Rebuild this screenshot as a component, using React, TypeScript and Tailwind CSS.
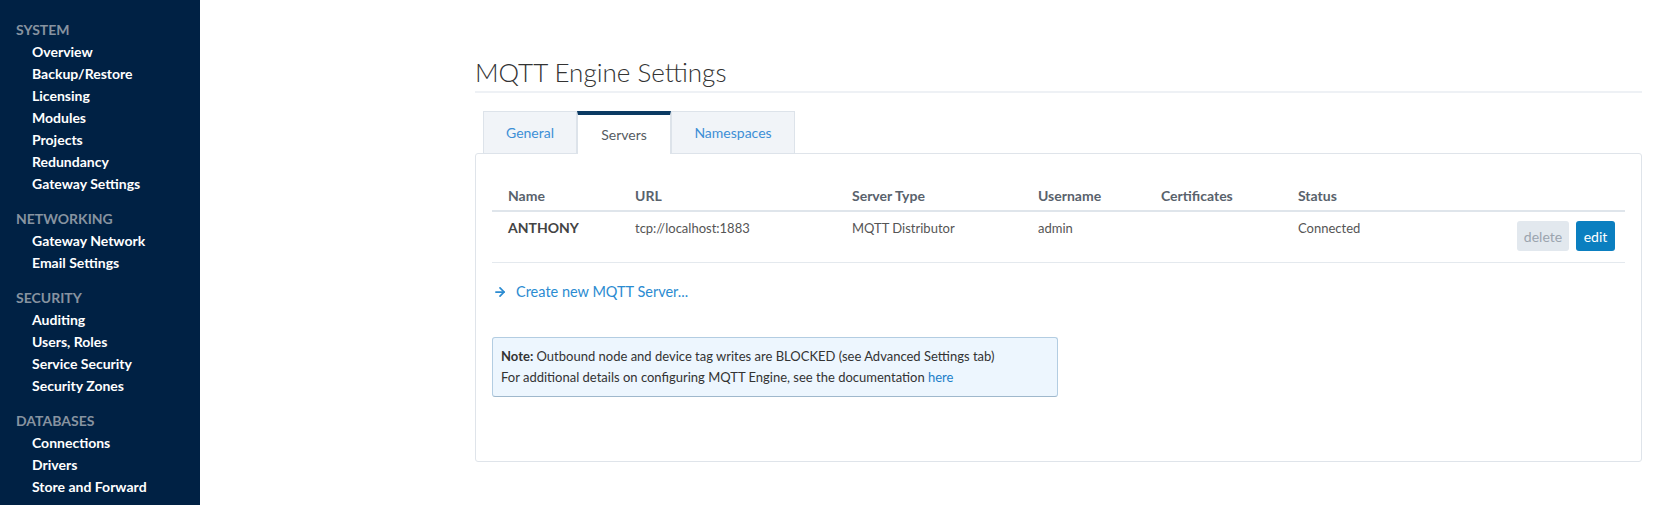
import React from 'react';
import { ArrowRight } from 'lucide-react';

const navSections = [
  {
    title: 'System',
    items: ['Overview', 'Backup/Restore', 'Licensing', 'Modules', 'Projects', 'Redundancy', 'Gateway Settings'],
  },
  { title: 'Networking', items: ['Gateway Network', 'Email Settings'] },
  { title: 'Security', items: ['Auditing', 'Users, Roles', 'Service Security', 'Security Zones'] },
  { title: 'Databases', items: ['Connections', 'Drivers', 'Store and Forward'] },
];

const columns = [
  { label: 'Name', width: 'w-[127px]' },
  { label: 'URL', width: 'w-[217px]' },
  { label: 'Server Type', width: 'w-[186px]' },
  { label: 'Username', width: 'w-[123px]' },
  { label: 'Certificates', width: 'w-[137px]' },
  { label: 'Status', width: 'w-[140px]' },
];

const Sidebar: React.FC = () => (
  <aside className="w-[200px] shrink-0 bg-[#002144] pt-[18px] pl-4">
    {navSections.map((section, i) => (
      <div key={section.title} className={i > 0 ? 'mt-3' : ''}>
        <div className="text-[14px] leading-[23px] font-bold uppercase text-[#8793a0]">{section.title}</div>
        {section.items.map((item) => (
          <div key={item} className="pl-4 text-[14px] leading-[22px] font-bold text-white">
            {item}
          </div>
        ))}
      </div>
    ))}
  </aside>
);

const Tabs: React.FC = () => (
  <div className="mt-[18px] ml-[8px] flex -mb-px relative">
    <div className="w-[94px] h-[43px] flex items-center justify-center bg-[#f1f4f8] border border-[#dde3ea] text-[14px] text-[#3d8fd6]">
      General
    </div>
    <div className="w-[94px] h-[43px] flex items-center justify-center bg-white border-t-4 border-t-[#0b3a63] border-x border-x-[#dde3ea] text-[14px] text-[#555b62]">
      Servers
    </div>
    <div className="w-[124px] h-[43px] flex items-center justify-center bg-[#f1f4f8] border border-[#dde3ea] text-[14px] text-[#3d8fd6]">
      Namespaces
    </div>
  </div>
);

const ServersTable: React.FC = () => (
  <table className="w-full table-fixed border-collapse text-[13px]">
    <thead>
      <tr className="border-b-2 border-[#dfe5eb]">
        {columns.map((col) => (
          <th key={col.label} className={`${col.width} pl-4 pt-[10px] pb-[4px] leading-[20px] text-left text-[14px] font-bold text-[#59626c]`}>
            {col.label}
          </th>
        ))}
        <th />
      </tr>
    </thead>
    <tbody>
      <tr className="border-b border-[#e4e9ee] align-top">
        <td className="pl-4 pt-[6px] leading-[20px] text-[14px] font-bold text-[#444]">ANTHONY</td>
        <td className="pl-4 pt-[6px] leading-[20px] text-[#555]">tcp://localhost:1883</td>
        <td className="pl-4 pt-[6px] leading-[20px] text-[#555]">MQTT Distributor</td>
        <td className="pl-4 pt-[6px] leading-[20px] text-[#555]">admin</td>
        <td className="pl-4 pt-[6px] leading-[20px] text-[#555]"></td>
        <td className="pl-4 pt-[6px] leading-[20px] text-[#555]">Connected</td>
        <td className="pt-[9px] pb-[11px] pr-[10px]">
          <div className="flex justify-end gap-[7px]">
            <button className="h-[30px] w-[52px] rounded-[3px] bg-[#e2e8ee] text-[14px] text-[#9ba4ae]">delete</button>
            <button className="h-[30px] w-[39px] rounded-[3px] bg-[#0b7fc0] text-[14px] text-white">edit</button>
          </div>
        </td>
      </tr>
    </tbody>
  </table>
);

export default function App() {
  return (
    <div className="flex min-h-screen bg-white font-['Lato','Liberation_Sans',sans-serif]">
      <Sidebar />
      <main className="flex-1 pl-[275px] pr-[26px]">
        <h1 className="pt-[54px] pb-[1px] leading-[36px] text-[26px] font-light text-[#333] border-b-2 border-[#eef1f5]">
          MQTT Engine Settings
        </h1>
        <Tabs />
        <section className="border border-[#dfe4ea] rounded-[3px] bg-white px-4 pt-[22px] pb-[64px]">
          <ServersTable />
          <div className="mt-[17px] flex items-center leading-[24px] text-[14.5px] text-[#2b8bd1]">
            <ArrowRight size={14} strokeWidth={3} className="ml-[1px]" />
            <span className="ml-[9px]">Create new MQTT Server...</span>
          </div>
          <div className="mt-[33px] w-[566px] rounded-[3px] border border-[#b3cde2] border-b-[#9fb8cc] bg-[#edf6fe] px-2 py-2 text-[13px] leading-[21px] text-[#333]">
            <div>
              <span className="font-bold">Note:</span> Outbound node and device tag writes are BLOCKED (see Advanced Settings tab)
            </div>
            <div>
              For additional details on configuring MQTT Engine, see the documentation{' '}
              <span className="text-[#1b7fc9]">here</span>
            </div>
          </div>
        </section>
      </main>
    </div>
  );
}
